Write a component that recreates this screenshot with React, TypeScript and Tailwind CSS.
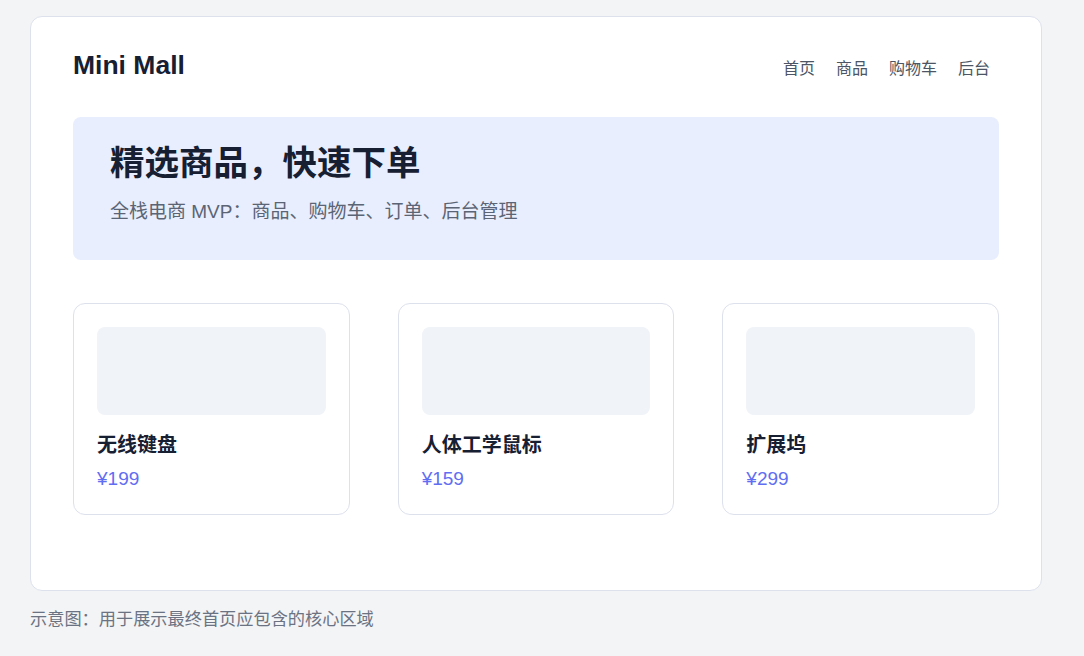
const products = [
  { name: "无线键盘", price: "¥199" },
  { name: "人体工学鼠标", price: "¥159" },
  { name: "扩展坞", price: "¥299" },
];

const navItems = ["首页", "商品", "购物车", "后台"];

const font = "font-['Liberation_Sans','Noto_Sans_CJK_SC',sans-serif]";

export default function App() {
  return (
    <div className={`min-h-screen bg-[#f3f4f6] pt-[16px] pl-[30px] ${font}`}>
      {/* 主卡片 */}
      <div className="w-[1012px] rounded-xl border border-[#dde1ec] bg-white px-[42px] pt-[32px] pb-[75px]">
        {/* 顶部导航 */}
        <header className="flex items-baseline justify-between">
          <h1 className="text-[26.5px] leading-8 font-bold text-[#172033]">Mini Mall</h1>
          <nav className="flex gap-[21px] pr-[9px] text-base text-[#4b5563]">
            {navItems.map((item) => (
              <a key={item} href="#">
                {item}
              </a>
            ))}
          </nav>
        </header>

        {/* 横幅 */}
        <section className="mt-[36px] h-[143px] rounded-lg bg-[#e8eefd] pl-[37px] pt-[25px]">
          <h2 className="text-[34.5px] leading-[42px] font-bold text-[#172033]">精选商品，快速下单</h2>
          <p className="mt-[14px] text-[19px] leading-7 text-[#5b6474]">
            全栈电商 MVP：商品、购物车、订单、后台管理
          </p>
        </section>

        {/* 商品列表 */}
        <div className="mt-[43px] grid grid-cols-3 gap-12">
          {products.map((p) => (
            <div key={p.name} className="rounded-xl border border-[#dde1ec] px-[23px] pt-[23px] pb-[22px]">
              <div className="h-[88px] rounded-lg bg-[#f0f3f8]" />
              <div className="mt-[16px] text-[20px] leading-7 font-bold text-[#172033]">{p.name}</div>
              <div className="mt-[7px] text-[19px] leading-[26px] text-[#5f6ef2]">{p.price}</div>
            </div>
          ))}
        </div>
      </div>

      <p className="mt-[16px] text-[17.2px] leading-6 text-[#6b7383]">
        示意图：用于展示最终首页应包含的核心区域
      </p>
    </div>
  );
}
